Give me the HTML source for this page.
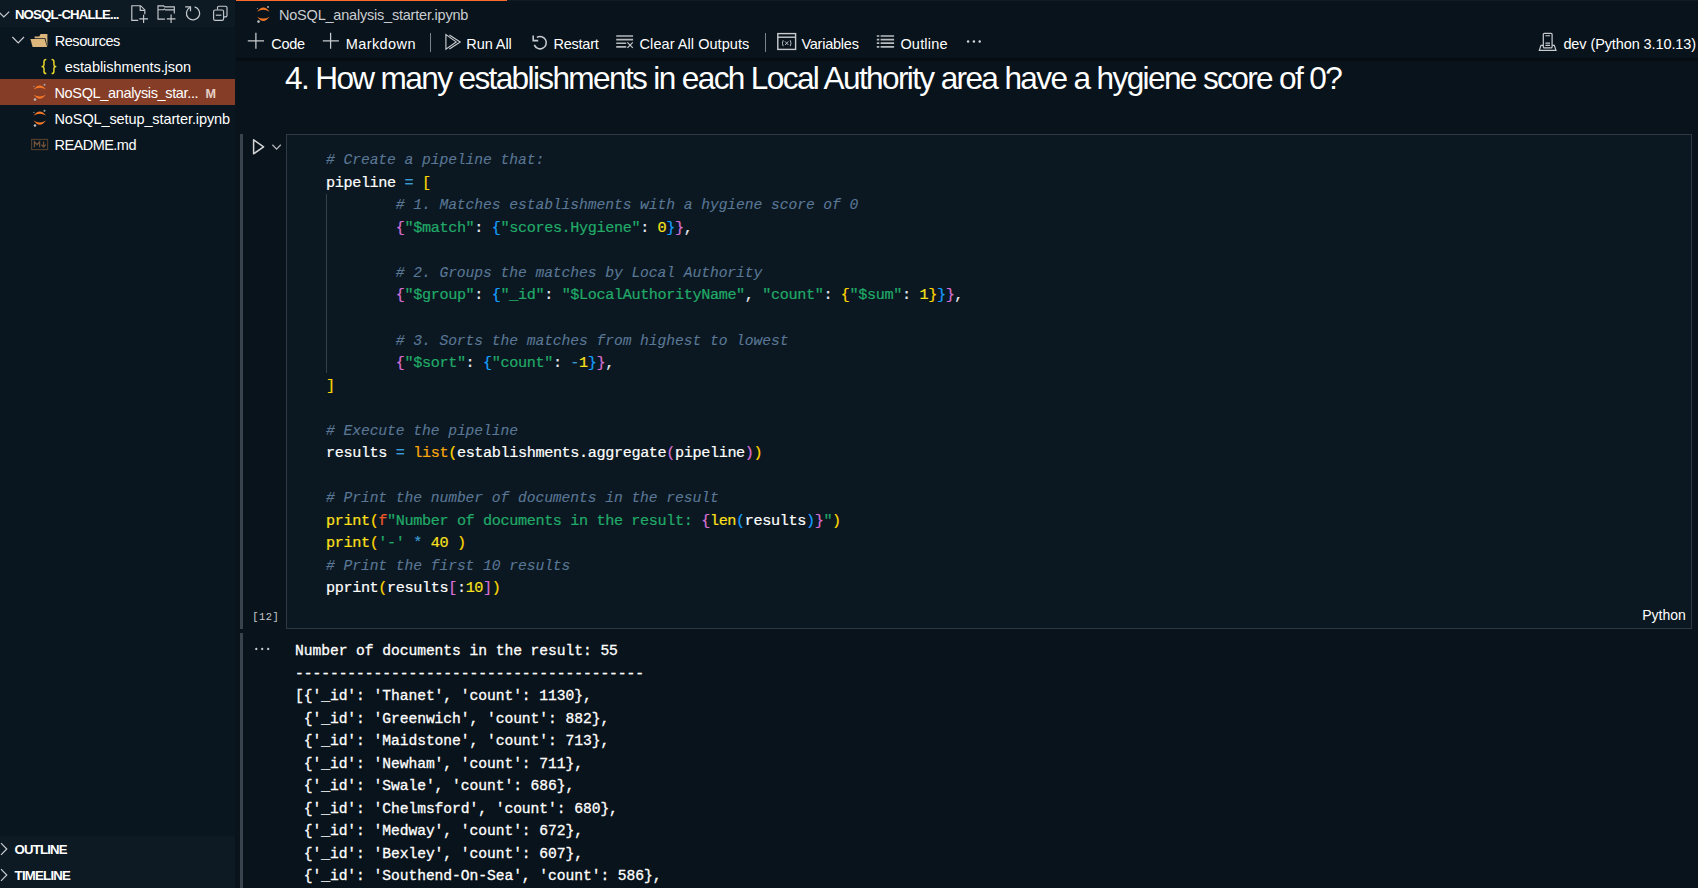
<!DOCTYPE html>
<html lang="en"><head><meta charset="utf-8"><title>NoSQL_analysis_starter.ipynb</title>
<style>
html,body{margin:0;padding:0}
body{width:1698px;height:888px;overflow:hidden;background:#09131b;position:relative;font-family:'Liberation Sans',sans-serif;color:#fff}
.abs{position:absolute}
.t{position:absolute;white-space:pre;display:block}
#side{position:absolute;left:0;top:0;width:235px;height:888px;background:#0a161f}
#shead{position:absolute;left:0;top:0;width:235px;height:27px;background:#0d1a24}
#sel{position:absolute;left:0;top:79px;width:235px;height:26px;background:#863d27}
#sfoot{position:absolute;left:0;top:836px;width:235px;height:52px;background:#0d1a24}
#tabtop{position:absolute;left:236px;top:0;width:271px;height:1px;background:#fc6a2c}
#tabline{position:absolute;left:508px;top:0;width:1190px;height:1px;background:#101b25}
#tbshadow{position:absolute;left:236px;top:58px;width:1462px;height:4px;background:linear-gradient(#050a0e,#09131b)}
.sep{position:absolute;width:1px;top:33px;height:19px;background:#79818a}
#cell{position:absolute;left:286px;top:134px;width:1404px;height:493px;border:1px solid #2d3944;background:#0b1821}
.bar{position:absolute;left:240px;width:3px;background:#39434d}
.code{position:absolute;font:15.2px/22.53px 'Liberation Mono',monospace;letter-spacing:-0.39px;color:#fff;-webkit-text-stroke:0.2px}
.ln{height:22.53px;white-space:pre}
.c{color:#5a7795;font-style:italic;font-size:14.67px;letter-spacing:-0.07px;-webkit-text-stroke:0.12px} .v{color:#fff} .o{color:#3a9ad6} .p{color:#e6eaee}
.b1{color:#ffd700} .b2{color:#da70d6} .b3{color:#179fff}
.s{color:#21aa68} .n{color:#f9e21c} .f{color:#ffe01a} .k{color:#f0592b} .y{color:#fba80c}
#guide{position:absolute;left:326px;top:194px;width:1px;height:179px;background:#353f48}
svg{position:absolute;overflow:visible}
</style></head><body>
<div id="side"></div><div id="shead"></div><div id="sel"></div><div id="sfoot"></div>
<div id="tabtop"></div><div id="tabline"></div><div id="tbshadow"></div>
<div class="sep" style="left:430px"></div><div class="sep" style="left:765px"></div>
<div id="cell"></div>
<div class="bar" style="top:134px;height:495px"></div><div class="bar" style="top:633px;height:255px"></div>
<div id="guide"></div>
<div class="code" id="code" style="left:326px;top:149.4px">
<div class="ln"><span class="c"># Create a pipeline that:</span></div>
<div class="ln"><span class="v">pipeline</span> <span class="o">=</span> <span class="b1">[</span></div>
<div class="ln">        <span class="c"># 1. Matches establishments with a hygiene score of 0</span></div>
<div class="ln">        <span class="b2">{</span><span class="s">&quot;$match&quot;</span><span class="p">:</span> <span class="b3">{</span><span class="s">&quot;scores.Hygiene&quot;</span><span class="p">:</span> <span class="n">0</span><span class="b3">}</span><span class="b2">}</span><span class="p">,</span></div>
<div class="ln">&nbsp;</div>
<div class="ln">        <span class="c"># 2. Groups the matches by Local Authority</span></div>
<div class="ln">        <span class="b2">{</span><span class="s">&quot;$group&quot;</span><span class="p">:</span> <span class="b3">{</span><span class="s">&quot;_id&quot;</span><span class="p">:</span> <span class="s">&quot;$LocalAuthorityName&quot;</span><span class="p">,</span> <span class="s">&quot;count&quot;</span><span class="p">:</span> <span class="b1">{</span><span class="s">&quot;$sum&quot;</span><span class="p">:</span> <span class="n">1</span><span class="b1">}</span><span class="b3">}</span><span class="b2">}</span><span class="p">,</span></div>
<div class="ln">&nbsp;</div>
<div class="ln">        <span class="c"># 3. Sorts the matches from highest to lowest</span></div>
<div class="ln">        <span class="b2">{</span><span class="s">&quot;$sort&quot;</span><span class="p">:</span> <span class="b3">{</span><span class="s">&quot;count&quot;</span><span class="p">:</span> <span class="o">-</span><span class="n">1</span><span class="b3">}</span><span class="b2">}</span><span class="p">,</span></div>
<div class="ln"><span class="b1">]</span></div>
<div class="ln">&nbsp;</div>
<div class="ln"><span class="c"># Execute the pipeline</span></div>
<div class="ln"><span class="v">results</span> <span class="o">=</span> <span class="y">list</span><span class="b1">(</span><span class="v">establishments.aggregate</span><span class="b2">(</span><span class="v">pipeline</span><span class="b2">)</span><span class="b1">)</span></div>
<div class="ln">&nbsp;</div>
<div class="ln"><span class="c"># Print the number of documents in the result</span></div>
<div class="ln"><span class="f">print</span><span class="b1">(</span><span class="k">f</span><span class="s">&quot;Number of documents in the result: </span><span class="b2">{</span><span class="f">len</span><span class="b3">(</span><span class="v">results</span><span class="b3">)</span><span class="b2">}</span><span class="s">&quot;</span><span class="b1">)</span></div>
<div class="ln"><span class="f">print</span><span class="b1">(</span><span class="s">&#x27;-&#x27;</span> <span class="o">*</span> <span class="n">40</span> <span class="b1">)</span></div>
<div class="ln"><span class="c"># Print the first 10 results</span></div>
<div class="ln"><span class="v">pprint</span><span class="b1">(</span><span class="v">results</span><span class="b2">[</span><span class="p">:</span><span class="n">10</span><span class="b2">]</span><span class="b1">)</span></div>
</div>
<div class="code" id="out" style="left:295px;top:640.2px;font-size:14.67px;letter-spacing:-0.07px;-webkit-text-stroke:0.3px">
<div class="ln">Number of documents in the result: 55</div>
<div class="ln">----------------------------------------</div>
<div class="ln">[{&#x27;_id&#x27;: &#x27;Thanet&#x27;, &#x27;count&#x27;: 1130},</div>
<div class="ln"> {&#x27;_id&#x27;: &#x27;Greenwich&#x27;, &#x27;count&#x27;: 882},</div>
<div class="ln"> {&#x27;_id&#x27;: &#x27;Maidstone&#x27;, &#x27;count&#x27;: 713},</div>
<div class="ln"> {&#x27;_id&#x27;: &#x27;Newham&#x27;, &#x27;count&#x27;: 711},</div>
<div class="ln"> {&#x27;_id&#x27;: &#x27;Swale&#x27;, &#x27;count&#x27;: 686},</div>
<div class="ln"> {&#x27;_id&#x27;: &#x27;Chelmsford&#x27;, &#x27;count&#x27;: 680},</div>
<div class="ln"> {&#x27;_id&#x27;: &#x27;Medway&#x27;, &#x27;count&#x27;: 672},</div>
<div class="ln"> {&#x27;_id&#x27;: &#x27;Bexley&#x27;, &#x27;count&#x27;: 607},</div>
<div class="ln"> {&#x27;_id&#x27;: &#x27;Southend-On-Sea&#x27;, &#x27;count&#x27;: 586},</div>
</div>
<span class="t" style="left:14.90px;top:6.23px;font:normal 700 13.2px/17px 'Liberation Sans',sans-serif;letter-spacing:-0.799px;color:#ffffff">NOSQL-CHALLE...</span>
<span class="t" style="left:54.80px;top:31.78px;font:normal 400 14.5px/19px 'Liberation Sans',sans-serif;letter-spacing:-0.482px;color:#fff">Resources</span>
<span class="t" style="left:64.70px;top:57.78px;font:normal 400 14.5px/19px 'Liberation Sans',sans-serif;letter-spacing:-0.054px;color:#fff">establishments.json</span>
<span class="t" style="left:54.50px;top:83.78px;font:normal 400 14.5px/19px 'Liberation Sans',sans-serif;letter-spacing:-0.352px;color:#fff">NoSQL_analysis_star...</span>
<span class="t" style="left:205.60px;top:85.93px;font:normal 700 12.6px/16px 'Liberation Sans',sans-serif;letter-spacing:0.000px;color:#e6cfc6">M</span>
<span class="t" style="left:54.50px;top:109.78px;font:normal 400 14.5px/19px 'Liberation Sans',sans-serif;letter-spacing:-0.107px;color:#fff">NoSQL_setup_starter.ipynb</span>
<span class="t" style="left:54.50px;top:135.78px;font:normal 400 14.5px/19px 'Liberation Sans',sans-serif;letter-spacing:-0.530px;color:#fff">README.md</span>
<span class="t" style="left:14.60px;top:841.23px;font:normal 700 13.2px/17px 'Liberation Sans',sans-serif;letter-spacing:-0.830px;color:#fff">OUTLINE</span>
<span class="t" style="left:14.60px;top:867.23px;font:normal 700 13.2px/17px 'Liberation Sans',sans-serif;letter-spacing:-0.749px;color:#fff">TIMELINE</span>
<span class="t" style="left:279.00px;top:5.78px;font:normal 400 14.5px/19px 'Liberation Sans',sans-serif;letter-spacing:-0.211px;color:#c9cdd1">NoSQL_analysis_starter.ipynb</span>
<span class="t" style="left:271.30px;top:34.78px;font:normal 400 14.5px/19px 'Liberation Sans',sans-serif;letter-spacing:-0.300px;color:#fff">Code</span>
<span class="t" style="left:345.70px;top:34.78px;font:normal 400 14.5px/19px 'Liberation Sans',sans-serif;letter-spacing:0.426px;color:#fff">Markdown</span>
<span class="t" style="left:466.30px;top:34.78px;font:normal 400 14.5px/19px 'Liberation Sans',sans-serif;letter-spacing:-0.070px;color:#fff">Run All</span>
<span class="t" style="left:553.50px;top:34.78px;font:normal 400 14.5px/19px 'Liberation Sans',sans-serif;letter-spacing:-0.235px;color:#fff">Restart</span>
<span class="t" style="left:639.60px;top:34.78px;font:normal 400 14.5px/19px 'Liberation Sans',sans-serif;letter-spacing:0.053px;color:#fff">Clear All Outputs</span>
<span class="t" style="left:801.40px;top:34.78px;font:normal 400 14.5px/19px 'Liberation Sans',sans-serif;letter-spacing:-0.228px;color:#fff">Variables</span>
<span class="t" style="left:900.40px;top:34.78px;font:normal 400 14.5px/19px 'Liberation Sans',sans-serif;letter-spacing:0.204px;color:#fff">Outline</span>
<span class="t" style="left:1563.40px;top:34.78px;font:normal 400 14.5px/19px 'Liberation Sans',sans-serif;letter-spacing:-0.099px;color:#fff">dev (Python 3.10.13)</span>
<span class="t" style="left:285.00px;top:57.85px;font:normal 400 31.6px/41px 'Liberation Sans',sans-serif;letter-spacing:-1.641px;color:#fff">4. How many establishments in each Local Authority area have a hygiene score of 0?</span>
<span class="t" style="left:1642.30px;top:606.45px;font:normal 400 14px/18px 'Liberation Sans',sans-serif;letter-spacing:-0.020px;color:#fff">Python</span>
<span class="t" style="left:252.30px;top:609.53px;font:normal 400 10.4px/14px 'Liberation Mono',sans-serif;letter-spacing:0.465px;color:#c8ccd0">[12]</span>
<svg width="1698" height="888" viewBox="0 0 1698 888" style="left:0;top:0" fill="none" stroke-linecap="butt" stroke-linejoin="miter">
<!-- sidebar header chevron -->
<path d="M-1.6 11.6 L3.8 17 L9.2 11.6" stroke="#c8ccd0" stroke-width="1.2"/>
<!-- new file -->
<g stroke="#c5c9cd" stroke-width="1.15">
<path d="M138.2 20.4 H131.8 V5.7 H140.6 L144.8 9.9 V14.2"/>
<path d="M140.2 5.9 V10.3 H144.6"/>
<path d="M139.3 18.9 H148 M143.6 14.7 V23.1"/>
<!-- new folder -->
<path d="M164.9 19.1 H158 V5.8 H163.6 L164.8 6.9 H174.3 V13.6"/>
<path d="M158 9.7 H163.6 L164.8 8.6 M164.8 9.9 H174.3" />
<path d="M166.8 18.9 H175.5 M171.1 14.6 V23.1"/>
<!-- refresh -->
<path d="M194.6 6.9 A6.6 6.6 0 1 1 189.9 7.5" stroke-width="1.25"/>
<path d="M185.2 6.8 H190.5 V11.3" stroke-width="1.25"/>
<!-- collapse all -->
<path d="M217.5 9.4 V7.6 Q217.5 6.2 218.9 6.2 H225.6 Q227 6.2 227 7.6 V15.4 Q227 16.8 225.6 16.8 H224"/>
<rect x="213.6" y="10" width="10" height="10.4" rx="1.6"/>
<path d="M215.8 15.2 H221.4"/>
</g>
<!-- tree chevron -->
<path d="M12.4 37 L18.2 42.9 L24 37" stroke="#c8ccd0" stroke-width="1.2"/>
<!-- folder icon -->
<g fill="#dcb67a" stroke="none">
<path d="M40.6 34 H47.4 V46.4 L45.4 38.2 H34.6 V36.6 H39.2 Z"/>
<path d="M30.4 39 H44.6 L47.2 47 H32.6 Z"/>
</g>
<!-- json braces -->
<g stroke="#e6d52a" stroke-width="1.5" stroke-linejoin="round">
<path d="M46.3 59.6 Q44 59.6 44 61.8 V64.6 Q44 66.4 42.2 66.6 Q44 66.8 44 68.6 V71.4 Q44 73.6 46.3 73.6"/>
<path d="M51.6 59.6 Q53.9 59.6 53.9 61.8 V64.6 Q53.9 66.4 55.7 66.6 Q53.9 66.8 53.9 68.6 V71.4 Q53.9 73.6 51.6 73.6"/>
</g>
<!-- jupyter icons -->
<g id="jup1">
<path d="M33.6 89.6 Q39.8 81.2 46 89.6 Q39.8 85.8 33.6 89.6 Z" fill="#f37726"/>
<path d="M33.6 94.6 Q39.8 103 46 94.6 Q39.8 98.4 33.6 94.6 Z" fill="#f37726"/>
<circle cx="44.5" cy="84.8" r="1" fill="#a9a9a9"/><circle cx="35" cy="99.5" r="1.3" fill="#bdbdbd"/><circle cx="33.9" cy="86.4" r="0.6" fill="#9a9a9a"/>
</g>
<g transform="translate(0,26)">
<path d="M33.6 89.6 Q39.8 81.2 46 89.6 Q39.8 85.8 33.6 89.6 Z" fill="#f37726"/>
<path d="M33.6 94.6 Q39.8 103 46 94.6 Q39.8 98.4 33.6 94.6 Z" fill="#f37726"/>
<circle cx="44.5" cy="84.8" r="1" fill="#a9a9a9"/><circle cx="35" cy="99.5" r="1.3" fill="#bdbdbd"/><circle cx="33.9" cy="86.4" r="0.6" fill="#9a9a9a"/>
</g>
<g transform="translate(223.5,-77.9)">
<path d="M33.6 89.6 Q39.8 81.2 46 89.6 Q39.8 85.8 33.6 89.6 Z" fill="#f37726"/>
<path d="M33.6 94.6 Q39.8 103 46 94.6 Q39.8 98.4 33.6 94.6 Z" fill="#f37726"/>
<circle cx="44.5" cy="84.8" r="1" fill="#a9a9a9"/><circle cx="35" cy="99.5" r="1.3" fill="#bdbdbd"/><circle cx="33.9" cy="86.4" r="0.6" fill="#9a9a9a"/>
</g>
<!-- markdown icon -->
<g stroke="#6e5138" stroke-width="1.1">
<rect x="31.6" y="139.4" width="16" height="10.2" stroke="#54402e"/>
<path d="M34.4 147.2 V141.8 L37 144.8 L39.6 141.8 V147.2" stroke-width="1.3"/>
<path d="M43.6 141.6 V146.6 M41.4 144.6 L43.6 147 L45.8 144.6" stroke-width="1.3"/>
</g>
<!-- outline/timeline chevrons -->
<path d="M1 843.2 L6.8 849 L1 854.8" stroke="#c8ccd0" stroke-width="1.2"/>
<path d="M1 869.2 L6.8 875 L1 880.8" stroke="#c8ccd0" stroke-width="1.2"/>
<!-- toolbar: plus icons -->
<g stroke="#c8ccd0" stroke-width="1.25">
<path d="M247.8 40.8 H264 M255.9 32.8 V48.8"/>
<path d="M322.8 40.8 H338.9 M330.6 32.8 V48.8"/>
<!-- run all -->
<path d="M445.9 34.6 V49.2 L456.2 41.9 Z" stroke-width="1.15"/>
<path d="M449.4 34.9 L460.2 41.9 L449.4 48.9" stroke-width="1.15"/>
<!-- restart -->
<path d="M536.9 37.3 A6.2 6.2 0 1 1 534.3 44.9" stroke-width="1.55"/>
<path d="M533.2 35.6 V40.6 H538.2" stroke-width="1.55"/>
<!-- clear all -->
<path d="M616.2 36 H633.1 M616.2 39.6 H633.1 M616.2 43.2 H626.2 M616.2 46.9 H626.2" stroke-width="1.6" stroke="#b4b8bc"/>
<path d="M627.4 42.4 L632.8 47.8 M632.8 42.4 L627.4 47.8" stroke-width="1.2"/>
<!-- variables -->
<rect x="777.8" y="33.6" width="17.8" height="15.8" stroke-width="1.4"/>
<path d="M777.8 37.2 H795.6" stroke-width="1.4"/>
<path d="M783.2 40.2 Q781.6 43.2 783.2 46.2 M790.2 40.2 Q791.8 43.2 790.2 46.2 M785 41.4 L788.4 45 M788.4 41.4 L785 45" stroke-width="0.9"/>
<!-- outline -->
<path d="M876.8 36 H879.3 M876.8 39.6 H879.3 M876.8 43.2 H879.3 M876.8 46.9 H879.3 M880.6 36 H894.1 M880.6 39.6 H894.1 M880.6 43.2 H894.1 M880.6 46.9 H894.1" stroke-width="1.7" stroke="#b8bcc0"/>
</g>
<g fill="#d6d9dc">
<circle cx="968.1" cy="41.5" r="1.2"/><circle cx="973.9" cy="41.5" r="1.2"/><circle cx="979.7" cy="41.5" r="1.2"/>
</g>
<!-- kernel icon -->
<g stroke="#c8ccd0" stroke-width="1.2">
<rect x="1543.3" y="33.3" width="8.8" height="14.6" rx="1"/>
<path d="M1545.4 35.7 H1550 M1545.4 43.1 H1550 M1545.4 45.4 H1550" stroke-width="1.1"/>
<path d="M1543.3 45.3 H1541 L1539.3 50.4 H1556 L1554.3 45.3 H1552.1"/>
</g>
<!-- cell run -->
<path d="M253.6 139.8 V153.8 L263.6 146.8 Z" stroke="#d2d4d6" stroke-width="1.5" stroke-linejoin="round"/>
<path d="M272.4 144.8 L276.6 149.1 L280.8 144.8" stroke="#b4b8bc" stroke-width="1.3"/>
<!-- output dots -->
<g fill="#c8ccd0"><circle cx="256.3" cy="649" r="1.15"/><circle cx="262.2" cy="649" r="1.15"/><circle cx="268.2" cy="649" r="1.15"/></g>
</svg>

</body></html>
